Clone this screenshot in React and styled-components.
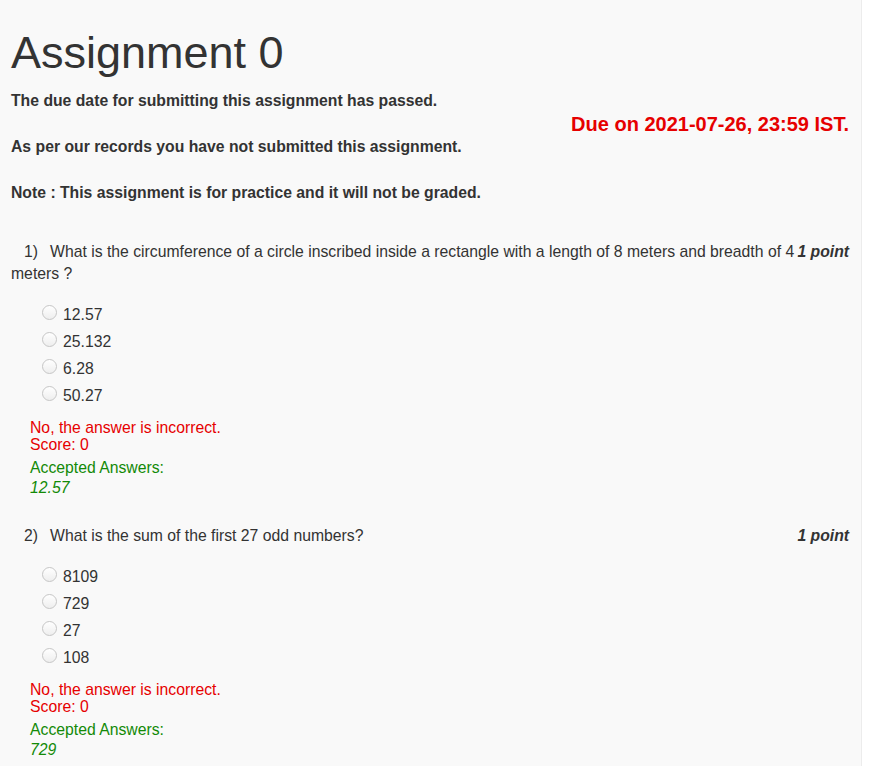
import React from "react";
import styled, { createGlobalStyle } from "styled-components";

const GlobalStyle = createGlobalStyle`
  html, body {
    margin: 0;
    padding: 0;
    background: #ffffff;
  }
  body {
    font-family: "Liberation Sans", Arial, sans-serif;
    color: #333333;
  }
`;

const questions = [
  {
    id: 1,
    text: "What is the circumference of a circle inscribed inside a rectangle with a length of 8 meters and breadth of 4 meters ?",
    options: ["12.57", "25.132", "6.28", "50.27"],
    accepted: "12.57",
  },
  {
    id: 2,
    text: "What is the sum of the first 27 odd numbers?",
    options: ["8109", "729", "27", "108"],
    accepted: "729",
  },
];

const App = () => {
  return (
    <>
      <GlobalStyle />
      <Page>
        <Title>Assignment 0</Title>
        <Header>
          <Notices>
            <Notice>The due date for submitting this assignment has passed.</Notice>
            <Notice>As per our records you have not submitted this assignment.</Notice>
            <Notice>Note : This assignment is for practice and it will not be graded.</Notice>
          </Notices>
          <DueDate>Due on 2021-07-26, 23:59 IST.</DueDate>
        </Header>

        {questions.map((q) => (
          <Question key={q.id}>
            <QuestionText>
              <Points>1 point</Points>
              <QNumber>{q.id})</QNumber>
              {q.text}
            </QuestionText>
            <Options>
              {q.options.map((opt) => (
                <Option key={opt}>
                  <Radio />
                  {opt}
                </Option>
              ))}
            </Options>
            <Feedback>
              <Wrong>
                No, the answer is incorrect.
                <br />
                Score: 0
              </Wrong>
              <Accepted>
                Accepted Answers:
                <br />
                <i>{q.accepted}</i>
              </Accepted>
            </Feedback>
          </Question>
        ))}
      </Page>
    </>
  );
};

const Page = styled.div`
  width: 862px;
  min-height: 100vh;
  box-sizing: border-box;
  background: #f9f9f9;
  border-right: 1px solid #ececec;
  padding: 28px 12px 0 11px;
  font-size: 15.75px;
`;

const Title = styled.h1`
  margin: 0 0 12px 0;
  font-size: 45px;
  font-weight: normal;
  line-height: 1.1;
  color: #333;
`;

const Header = styled.div`
  display: flex;
  justify-content: space-between;
  align-items: flex-start;
`;

const Notices = styled.div`
  display: flex;
  flex-direction: column;
  gap: 24px;
`;

const Notice = styled.p`
  margin: 0;
  font-weight: bold;
  line-height: 22px;
`;

const DueDate = styled.div`
  margin-top: 22px;
  color: #e60000;
  font-size: 20px;
  font-weight: bold;
  line-height: 24px;
`;

const Question = styled.div`
  margin-top: 37px;

  & + & {
    margin-top: 27px;
  }
`;

const QuestionText = styled.div`
  line-height: 22px;
`;

const QNumber = styled.span`
  display: inline-block;
  padding: 0 12px 0 13px;
`;

const Points = styled.span`
  float: right;
  font-weight: bold;
  font-style: italic;
`;

const Options = styled.div`
  margin: 16.5px 0 0 31px;
`;

const Option = styled.div`
  display: flex;
  align-items: center;
  gap: 6px;
  height: 27px;
`;

const Radio = styled.span`
  box-sizing: border-box;
  width: 15px;
  height: 15px;
  border-radius: 50%;
  border: 1px solid #c6c6c6;
  background: linear-gradient(#ffffff, #eeeeee);
  margin-top: -4px;
  flex-shrink: 0;
`;

const Feedback = styled.div`
  margin: 9.5px 0 0 19px;
`;

const Wrong = styled.div`
  color: #e60000;
  line-height: 17px;
`;

const Accepted = styled.div`
  margin-top: 5px;
  color: #138a07;
  line-height: 20px;
`;

export default App;
